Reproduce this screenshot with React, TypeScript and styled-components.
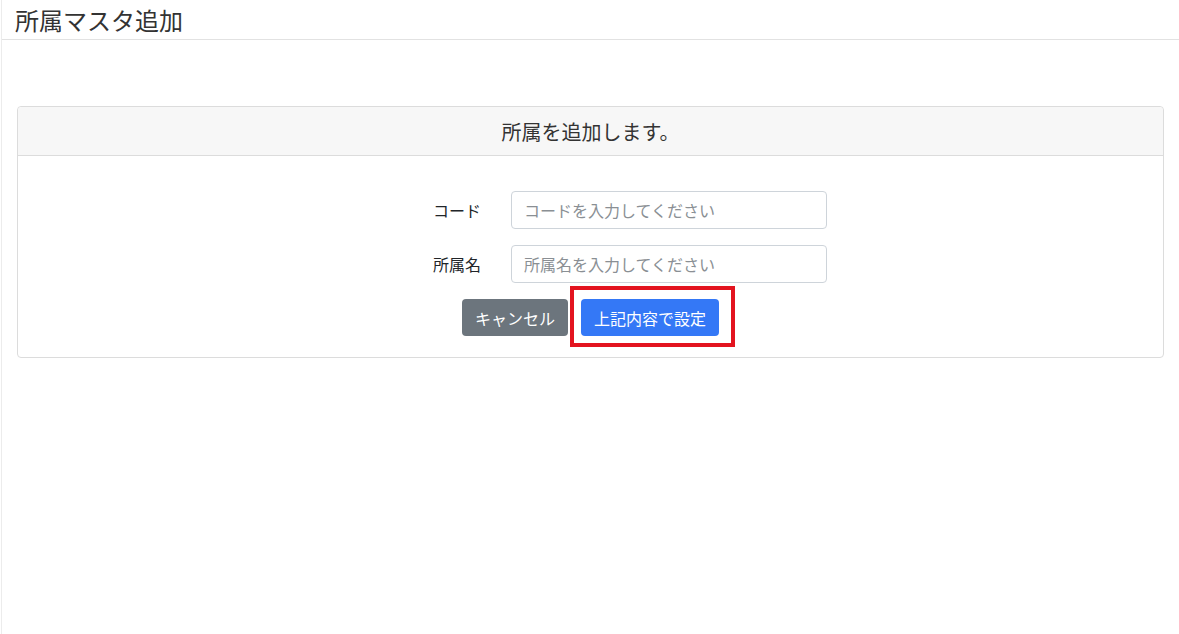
import styled, { createGlobalStyle } from "styled-components";

const GlobalStyle = createGlobalStyle`
    html, body {
        margin: 0;
        padding: 0;
        background: #fff;
        font-family: "Noto Sans CJK JP", "Noto Sans", sans-serif;
        color: #212529;
    }
`;

const Page = styled.div`
    min-height: 634px;
    margin-left: 1px;
    border-left: 1px solid #ececec;
`;

const TitleBar = styled.header`
    height: 39px;
    padding-left: 13px;
    border-bottom: 1px solid #e2e2e2;
    display: flex;
    align-items: center;
`;

const Title = styled.h1`
    margin: 0;
    font-size: 24px;
    font-weight: 400;
    color: #333;
`;

const Content = styled.main`
    padding: 66px 15px 0 15px;
`;

const Card = styled.section`
    border: 1px solid #dcdcdc;
    border-radius: 4px;
`;

const CardHeader = styled.div`
    height: 48px;
    background: #f7f7f7;
    border-bottom: 1px solid #dcdcdc;
    display: flex;
    align-items: center;
    justify-content: center;
    font-size: 20px;
    color: #333;
    border-radius: 4px 4px 0 0;
`;

const CardBody = styled.div`
    padding: 35px 0 21px;
`;

const FormRow = styled.div`
    display: grid;
    grid-template-columns: 493px 316px;
    align-items: center;
    margin-bottom: 16px;

    & + & {
        margin-top: 1px;
    }
`;

const Label = styled.label`
    text-align: right;
    padding-right: 30px;
    font-size: 16px;
    color: #212529;
`;

const Input = styled.input`
    height: 38px;
    box-sizing: border-box;
    border: 1px solid #ced4da;
    border-radius: 4px;
    padding: 0 12px;
    font-family: inherit;
    font-size: 16px;
    color: #212529;

    &::placeholder {
        color: #8a8f94;
    }
`;

const Actions = styled.div`
    display: flex;
    justify-content: center;
    align-items: center;
    gap: 13px;
`;

const Button = styled.button<{ $variant: "secondary" | "primary" }>`
    height: 37px;
    border: none;
    border-radius: 4px;
    padding: 0 13px;
    font-family: inherit;
    font-size: 16px;
    color: #fff;
    background: ${(p) => (p.$variant === "primary" ? "#3478f6" : "#6c757d")};
    cursor: pointer;
`;

const Highlight = styled.div`
    position: relative;
`;

const HighlightFrame = styled.span`
    position: absolute;
    top: -13px;
    bottom: -11px;
    left: -11px;
    right: -16px;
    border: 4px solid #e3141f;
    pointer-events: none;
`;

export default function App() {
    return (
        <>
            <GlobalStyle />
            <Page>
                <TitleBar>
                    <Title>所属マスタ追加</Title>
                </TitleBar>
                <Content>
                    <Card>
                        <CardHeader>所属を追加します。</CardHeader>
                        <CardBody>
                            <FormRow>
                                <Label htmlFor="code">コード</Label>
                                <Input id="code" placeholder="コードを入力してください" />
                            </FormRow>
                            <FormRow>
                                <Label htmlFor="name">所属名</Label>
                                <Input id="name" placeholder="所属名を入力してください" />
                            </FormRow>
                            <Actions>
                                <Button $variant="secondary">キャンセル</Button>
                                <Highlight>
                                    <Button $variant="primary">上記内容で設定</Button>
                                    <HighlightFrame />
                                </Highlight>
                            </Actions>
                        </CardBody>
                    </Card>
                </Content>
            </Page>
        </>
    );
}
